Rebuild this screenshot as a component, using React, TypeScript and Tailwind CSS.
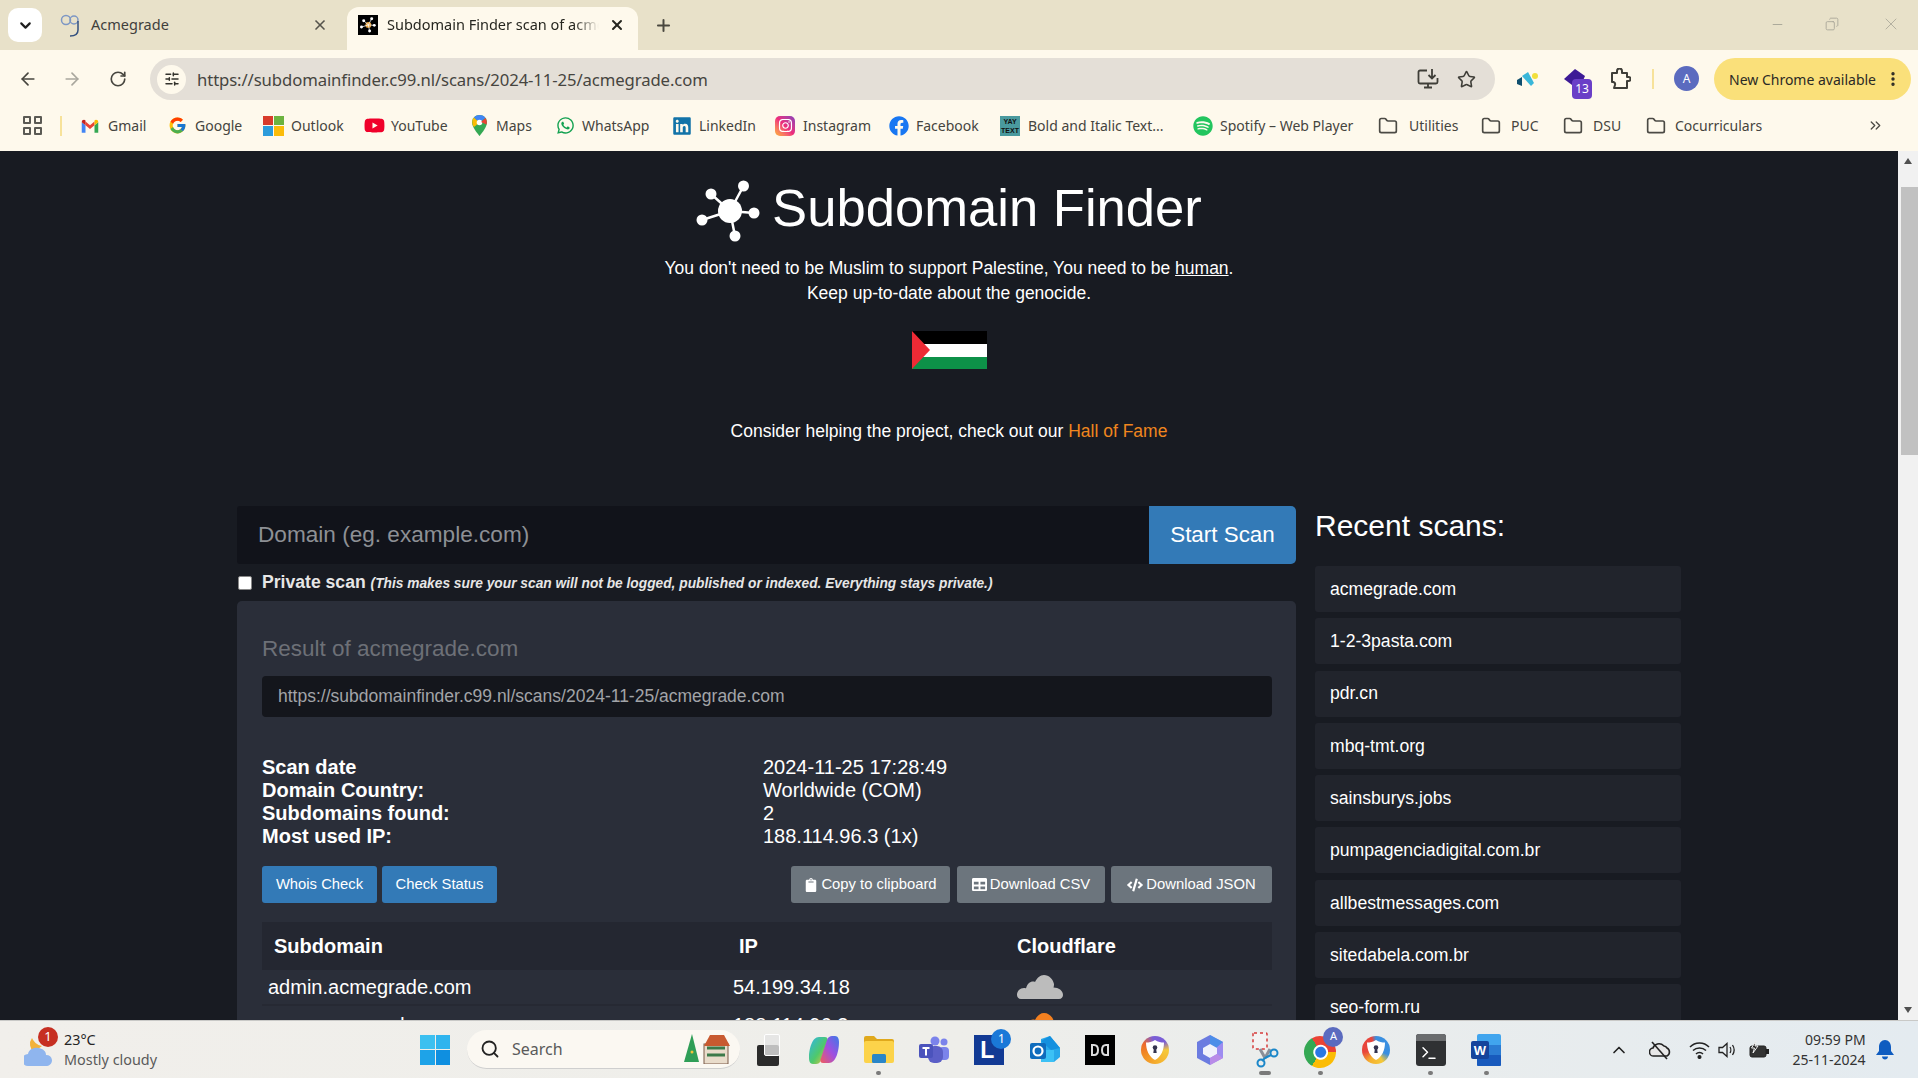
import React from "react";
import { ArrowLeft, ArrowRight, RotateCw, X, Plus, ChevronDown, Star, Search, Folder, ChevronsRight, ChevronUp, Minus, Copy, SlidersHorizontal, MoreVertical, Terminal } from "lucide-react";
import { FaWhatsapp, FaLinkedin, FaFacebook, FaSpotify, FaYoutube, FaClipboard, FaTable, FaCode, FaInstagram } from "react-icons/fa";
import { FcGoogle } from "react-icons/fc";

const Logo = ({ size = 65, color = "#fff" }: { size?: number; color?: string }) => (
  <svg width={size} height={size} viewBox="0 0 65 65" fill={color} stroke={color}>
    <circle cx="34" cy="32" r="12" stroke="none" />
    <circle cx="47.5" cy="7" r="5.5" stroke="none" />
    <circle cx="15" cy="15" r="5.5" stroke="none" />
    <circle cx="58" cy="34" r="5.5" stroke="none" />
    <circle cx="6" cy="41" r="5.5" stroke="none" />
    <circle cx="39" cy="57" r="5.5" stroke="none" />
    <path d="M34 32L47.5 7M34 32L15 15M34 32L58 34M34 32L6 41M34 32L39 57" strokeWidth="2.5" />
  </svg>
);

const Gmail = () => (
  <svg width="18" height="16" viewBox="0 0 24 20">
    <path d="M1 19V5l5 4v10z" fill="#4285f4" />
    <path d="M23 19V5l-5 4v10z" fill="#34a853" />
    <path d="M6 9v-5l6 5 6-5v5l-6 5z" fill="#ea4335" />
    <path d="M1 5c0-3 3-4 5-2.500V9z" fill="#c5221f" />
    <path d="M23 5c0-3-3-4-5-2.500V9z" fill="#fbbc04" />
  </svg>
);
const MsLogo = () => (
  <div className="grid grid-cols-2 gap-px w-[21px] h-[20px]">
    <div className="bg-[#d83b2b]" /><div className="bg-[#6cb33f]" />
    <div className="bg-[#2d9cdb]" /><div className="bg-[#fbbc09]" />
  </div>
);
const MapsPin = () => (
  <svg width="15" height="21" viewBox="0 0 15 21">
    <path d="M7.500 0C3.300 0 0 3.300 0 7.500 0 12.500 7.500 21 7.500 21S15 12.500 15 7.500C15 3.300 11.700 0 7.500 0z" fill="#34a853" />
    <path d="M2 2.500 L7.500 7.500 L2 12 C0 10 -.5 5 2 2.500z" fill="#fbbc04" />
    <path d="M7.500 0C10 0 12.500 1 13.500 3L7.500 7.500 L2 2.500C3 1 5 0 7.500 0z" fill="#4285f4" />
    <circle cx="7.500" cy="7.500" r="2.800" fill="#fff" />
    <path d="M13.500 3C15 5 15 8 14.500 9.500L9 7z" fill="#ea4335" />
  </svg>
);
const Insta = () => (
  <div className="w-5 h-5 rounded-[5px] bg-gradient-to-tr from-[#fdb022] via-[#ee2a7b] to-[#8a3ab9] flex items-center justify-center">
    <FaInstagram className="text-white" size={15} />
  </div>
);
const YayText = () => (
  <div className="w-[20px] h-[20px] bg-[#4a9a9e] flex flex-col items-center justify-center text-[7px] leading-[9px] font-bold text-[#111] font-['Liberation_Sans',sans-serif]">
    <span>YAY</span><span>TEXT</span>
  </div>
);
const Fold = () => <Folder size={20} strokeWidth={2} className="text-[#4b4a44]" />;

const bookmarks = [
  { w: "w-[87px]", icon: <Gmail />, t: "Gmail", gap: "gap-[9px]" },
  { w: "w-[95px]", icon: <FcGoogle size={19} />, t: "Google", gap: "gap-[8px]" },
  { w: "w-[101px]", icon: <MsLogo />, t: "Outlook", gap: "gap-[7px]" },
  { w: "w-[108px]", icon: <FaYoutube size={21} className="text-[#f0002a]" />, t: "YouTube", gap: "gap-[6px]" },
  { w: "w-[84px]", icon: <MapsPin />, t: "Maps", gap: "gap-[9px]" },
  { w: "w-[116px]", icon: <FaWhatsapp size={19} className="text-[#12a150]" />, t: "WhatsApp", gap: "gap-[7px]" },
  { w: "w-[103px]", icon: <FaLinkedin size={20} className="text-[#1273a8]" />, t: "LinkedIn", gap: "gap-[7px]" },
  { w: "w-[114px]", icon: <Insta />, t: "Instagram", gap: "gap-[8px]" },
  { w: "w-[111px]", icon: <FaFacebook size={20} className="text-[#1877f2]" />, t: "Facebook", gap: "gap-[7px]" },
  { w: "w-[193px]", icon: <YayText />, t: "Bold and Italic Text...", gap: "gap-[8px]" },
  { w: "w-[185px]", icon: <FaSpotify size={20} className="text-[#22c55e]" />, t: "Spotify – Web Player", gap: "gap-[7px]" },
  { w: "w-[103px]", icon: <Fold />, t: "Utilities", gap: "gap-[11px]" },
  { w: "w-[82px]", icon: <Fold />, t: "PUC", gap: "gap-[10px]" },
  { w: "w-[83px]", icon: <Fold />, t: "DSU", gap: "gap-[10px]" },
  { w: "w-[130px]", icon: <Fold />, t: "Cocurriculars", gap: "gap-[9px]" },
];

const recent = ["acmegrade.com", "1-2-3pasta.com", "pdr.cn", "mbq-tmt.org", "sainsburys.jobs", "pumpagenciadigital.com.br", "allbestmessages.com", "sitedabela.com.br", "seo-form.ru"];

const Cloud = ({ color }: { color: string }) => (
  <svg width="46" height="24" viewBox="0 0 46 24" fill={color}>
    <path d="M4 24C1.500 24 0 22 0 20c0-4 3-7 7-7 1 0 1.500 0 2 .5C10 9 13 6.500 16 6.500c1 0 1.500 0 2 .5C20 3 23 0 27 0c5 0 9 4 10 9 0 1 0 2-.5 3.500 5 0 9.500 3 9.500 7.500 0 2-1.500 4-4 4z" />
  </svg>
);

const Shield = ({ ring }: { ring: string }) => (
  <div className={`${ring} w-[28px] h-[28px] rounded-full flex items-center justify-center`}>
    <svg width="18" height="20" viewBox="0 0 18 20">
      <path d="M9 0c3 2 6 2.500 9 2.500C18 10 15 17 9 20 3 17 0 10 0 2.500 3 2.500 6 2 9 0z" fill="#fff" />
      <circle cx="9" cy="7.500" r="2.300" fill="#33334f" />
      <path d="M8 8h2l.7 5H7.300z" fill="#33334f" />
    </svg>
  </div>
);

const taskIcons: React.ReactNode[] = [
  <div key="tv" className="relative w-[24px] h-[32px]">
    <div className="absolute left-[0px] bottom-0 w-[22px] h-[21px] bg-[#2b2b2b] rounded-[2px]" />
    <div className="absolute left-[7px] top-0 w-[16px] h-[22px] bg-[#e3e3e3]/80 rounded-[2px] border border-white" />
  </div>,
  <svg key="cp" width="30" height="28" viewBox="0 0 30 28">
    <defs>
      <linearGradient id="cpa" x1="0" y1="0" x2="1" y2="1"><stop offset="0" stopColor="#2fb5e8" /><stop offset=".55" stopColor="#4fc96a" /><stop offset="1" stopColor="#f4c23c" /></linearGradient>
      <linearGradient id="cpb" x1="1" y1="0" x2="0" y2="1"><stop offset="0" stopColor="#3a7ae8" /><stop offset=".5" stopColor="#a04fe0" /><stop offset="1" stopColor="#f25c5c" /></linearGradient>
    </defs>
    <path d="M10 1h6c3 0 3 3 2 5l-6 18c-1 3-3 4-5 4H4c-3 0-4-3-4-6 0-9 3-21 10-21z" fill="url(#cpa)" />
    <path d="M20 27h-6c-3 0-3-3-2-5l6-18c1-3 3-4 5-4h3c3 0 4 3 4 6 0 9-3 21-10 21z" fill="url(#cpb)" />
  </svg>,
  <svg key="ex" width="30" height="27" viewBox="0 0 30 27">
    <path d="M0 2a2 2 0 0 1 2-2h8l3 3h15a2 2 0 0 1 2 2v3H0z" fill="#e0a91c" />
    <rect x="0" y="5" width="30" height="22" rx="2" fill="#fcd34a" />
    <rect x="8" y="18" width="14" height="9" rx="1.500" fill="#2a86c8" />
  </svg>,
  <svg key="te" width="30" height="27" viewBox="0 0 30 27">
    <circle cx="25" cy="6" r="3.500" fill="#7b83eb" />
    <circle cx="16" cy="5" r="4.500" fill="#7b83eb" />
    <rect x="20" y="11" width="10" height="13" rx="4" fill="#7b83eb" />
    <rect x="9" y="10" width="15" height="17" rx="6" fill="#5b5fc7" />
    <rect x="0" y="8" width="14" height="14" rx="2" fill="#4b53bc" />
    <path d="M3.500 11h7v2H8v6.500H6V13H3.500z" fill="#fff" />
  </svg>,
  <div key="l" className="relative w-[30px] h-[30px] bg-[#123a94] flex items-center justify-center">
    <span className="text-white text-[23px] font-bold font-['Liberation_Sans',sans-serif] leading-none -ml-[4px] mt-[2px]">L</span>
    <span className="absolute -top-[6px] -right-[7px] w-[20px] h-[20px] rounded-full bg-[#1a78d8] text-white text-[12px] flex items-center justify-center font-['Noto_Sans',sans-serif]">1</span>
  </div>,
  <svg key="ou" width="30" height="27" viewBox="0 0 30 27">
    <path d="M11 3l9-3 10 12v9l-6 5H11z" fill="#28a8ea" />
    <path d="M20 0l10 12-9 2-10-9z" fill="#1490df" />
    <path d="M11 14l13 0v12H11z" fill="#50d9ff" opacity=".5" />
    <rect x="0" y="7" width="16" height="16" rx="2" fill="#0f6cbd" />
    <circle cx="8" cy="15" r="4.500" fill="none" stroke="#fff" strokeWidth="2.200" />
  </svg>,
  <div key="do" className="w-[30px] h-[30px] bg-black flex items-center justify-center">
    <svg width="18" height="12" viewBox="0 0 18 12" fill="none" stroke="#ddd" strokeWidth="2"><path d="M1 1h2c3 0 4 2.500 4 5s-1 5-4 5H1zM17 1h-2c-3 0-4 2.500-4 5s1 5 4 5h2z" /></svg>
  </div>,
  <Shield key="p1" ring="bg-[conic-gradient(#7a5ed6_0deg,#7a5ed6_50deg,#f5c93a_90deg,#f5b02e_170deg,#f08a24_250deg,#ee6a2c_300deg,#7a5ed6_350deg)]" />,
  <svg key="ed" width="28" height="30" viewBox="0 0 28 30">
    <path d="M14 0l13 7v16l-13 7z" fill="#9d8cf0" />
    <path d="M14 0L1 7v16l13 7z" fill="#6b7be0" />
    <path d="M14 0l13 7-7 6-6-3z" fill="#4c8ee8" />
    <path d="M14 9l7 4v6l-7 4-7-4v-6z" fill="#f0f2fb" />
    <path d="M21 19l6 4-13 7v-7z" fill="#b98ce8" />
  </svg>,
  <svg key="sn" width="30" height="36" viewBox="0 0 30 36">
    <rect x="3" y="1" width="14" height="16" rx="1" fill="#f3f3f3" stroke="#d63b3b" strokeWidth="1.500" strokeDasharray="3 3" />
    <path d="M10 17l5 9M20 17l-5 9" stroke="#8a8f99" strokeWidth="3" />
    <circle cx="11" cy="31" r="3.500" fill="none" stroke="#1b87c9" strokeWidth="2" />
    <circle cx="24" cy="21" r="3.500" fill="none" stroke="#1b87c9" strokeWidth="2" />
    <path d="M15 26l-3 3M15 26l6-3" stroke="#1b87c9" strokeWidth="2" />
  </svg>,
  <div key="ch" className="relative w-[32px] h-[32px] flex items-center justify-center mt-[4px]">
    <div className="w-[32px] h-[32px] rounded-full bg-[conic-gradient(#ea4335_0deg_120deg,#fbbc04_120deg_240deg,#34a853_240deg_360deg)] flex items-center justify-center rotate-[-30deg]">
      <div className="w-[15px] h-[15px] rounded-full bg-[#2a78e4] border-2 border-white" />
    </div>
    <span className="absolute -top-[9px] right-[-7px] w-[20px] h-[20px] rounded-full bg-[#5b6bbf] text-white text-[11px] flex items-center justify-center font-['Noto_Sans',sans-serif]">A</span>
  </div>,
  <Shield key="p2" ring="bg-[conic-gradient(#3a8fe0_0deg,#3a8fe0_110deg,#f5c93a_150deg,#f5b02e_210deg,#e8453c_260deg,#e8453c_340deg,#3a8fe0_360deg)]" />,
  <div key="tm" className="w-[30px] h-[32px] bg-[#2f3133] rounded-[3px] flex flex-col overflow-hidden">
    <div className="h-[7px] bg-[#6a6c6e]" />
    <div className="flex-1 flex items-center pl-[4px]"><Terminal size={18} className="text-white" strokeWidth={2} /></div>
  </div>,
  <svg key="wd" width="30" height="32" viewBox="0 0 30 32">
    <rect x="6" y="0" width="24" height="32" rx="2" fill="#41a5ee" />
    <rect x="6" y="11" width="24" height="11" fill="#2b7cd3" />
    <rect x="6" y="21" width="24" height="11" rx="1" fill="#185abd" />
    <rect x="0" y="7" width="18" height="18" rx="2" fill="#15449c" />
    <text x="9" y="21" fontSize="13" fontWeight="700" fill="#fff" textAnchor="middle" fontFamily="Liberation Sans">W</text>
  </svg>,
];
const dots: (string | null)[] = [null, null, "w-[5px]", null, null, null, null, null, null, "w-[12px]", "w-[5px]", null, "w-[5px]", "w-[5px]"];

export default function App() {
  return (
    <div className="w-[1918px] h-[1078px] overflow-hidden flex flex-col bg-[#181b22] font-['Liberation_Sans',sans-serif]">
      {/* tab strip */}
      <div className="h-[50px] shrink-0 bg-[#e8e1c9] flex items-end font-['Noto_Sans',sans-serif] text-[#3f3f3c]">
        <div className="ml-[8px] mb-[8px] w-[34px] h-[34px] rounded-[10px] bg-white flex items-center justify-center">
          <ChevronDown size={17} strokeWidth={3} className="text-[#1f1f1f]" />
        </div>
        <div className="w-[305px] h-[43px] flex items-center pl-[18px] pr-[19px] pb-[7px]">
          <svg width="19" height="25" viewBox="0 0 19 25" fill="none" stroke="#7d97c4" strokeWidth="1.500">
            <circle cx="6" cy="7" r="4.500" /><circle cx="14" cy="7" r="4" /><path d="M18 8v9c0 5-4 6-8 6" stroke="#33507f" />
          </svg>
          <span className="ml-[12px] text-[14.500px] flex-1">Acmegrade</span>
          <X size={16} strokeWidth={2.500} className="text-[#55534c]" />
        </div>
        <div className="w-[291px] h-[43px] bg-[#fef9ec] rounded-t-[12px] flex items-center pl-[11px] pr-[13px] pb-[7px]">
          <div className="w-[20px] h-[20px] bg-black flex items-center justify-center shrink-0">
            <svg width="16" height="16" viewBox="0 0 65 65" fill="#fff" stroke="#fff">
              <circle cx="34" cy="32" r="12" fill="#e8a13a" stroke="none" />
              <circle cx="47.500" cy="7" r="6" stroke="none" /><circle cx="15" cy="15" r="6" stroke="none" /><circle cx="58" cy="34" r="6" stroke="none" /><circle cx="6" cy="41" r="6" stroke="none" /><circle cx="39" cy="57" r="6" stroke="none" />
              <path d="M34 32L47.500 7M34 32L15 15M34 32L58 34M34 32L6 41M34 32L39 57" strokeWidth="3" />
            </svg>
          </div>
          <span className="ml-[9px] text-[14.500px] w-[212px] overflow-hidden whitespace-nowrap text-[#26261f] [mask-image:linear-gradient(to_right,#000_88%,transparent)]">Subdomain Finder scan of acmegrade.com</span>
          <X size={16} strokeWidth={3} className="ml-auto text-[#26261f]" />
        </div>
        <Plus size={19} strokeWidth={2.500} className="ml-[16px] mb-[15px] text-[#4a483f]" />
        <div className="ml-auto flex items-center mb-[16px] text-[#a8a698]">
          <Minus size={15} strokeWidth={1.500} className="mr-[40px]" />
          <Copy size={14} strokeWidth={1.500} className="mr-[42px] -scale-x-100" />
          <X size={20} strokeWidth={1} className="mr-[17px]" />
        </div>
      </div>

      {/* toolbar */}
      <div className="h-[50px] shrink-0 bg-[#fef9ec] flex items-start pt-[8px] font-['Noto_Sans',sans-serif]">
        <ArrowLeft size={20} strokeWidth={2} className="ml-[18px] mt-[11px] text-[#47463f]" />
        <ArrowRight size={20} strokeWidth={2} className="ml-[24px] mt-[11px] text-[#a9a79d]" />
        <RotateCw size={18} strokeWidth={2.200} className="ml-[27px] mt-[12px] text-[#47463f]" />
        <div className="ml-[23px] w-[1345px] h-[42px] rounded-full bg-[#e4dfd7] flex items-center pl-[7px] pr-[19px]">
          <div className="w-[29px] h-[29px] rounded-full bg-[#fef9ec] flex items-center justify-center">
            <SlidersHorizontal size={16} strokeWidth={2.200} className="text-[#33322c]" />
          </div>
          <span className="ml-[11px] mt-[1px] text-[16.700px] text-[#46453f] tracking-[-0.100px]">https://subdomainfinder.c99.nl/scans/2024-11-25/acmegrade.com</span>
          <svg width="22" height="20" viewBox="0 0 22 20" fill="none" stroke="#3f3e38" strokeWidth="1.800" className="ml-auto mr-[2px]">
            <path d="M10 1.500H3a1.500 1.500 0 0 0-1.500 1.500v10A1.500 1.500 0 0 0 3 14.500h16a1.500 1.500 0 0 0 1.500-1.500V9" />
            <path d="M7 18.500h8M11 15v3" />
            <path d="M15 0v9M11.500 6l3.500 3.500L18.500 6" />
          </svg>
          <Star size={19} strokeWidth={2} className="ml-[16px] text-[#3f3e38]" />
        </div>
        <div className="ml-[21px] w-[24px] h-[24px] mt-[13px]">
          <svg width="22" height="16" viewBox="0 0 22 16">
            <path d="M1 9l5-3v9l-5-2z" fill="#0f4f6e" />
            <path d="M6 5l6-4 6 11-3 3z" fill="#3ab7d9" />
            <circle cx="19" cy="5" r="3" fill="#f1df3b" />
          </svg>
        </div>
        <div className="ml-[24px] relative w-[30px] h-[36px] mt-[3px]">
          <svg width="22" height="20" viewBox="0 0 22 20" className="absolute left-0 top-[8px]"><path d="M11 0l10 7-4 9H8L0 10z" fill="#3d1a96" /></svg>
          <span className="absolute left-[8px] top-[18px] w-[20px] h-[20px] rounded-[4px] bg-[#6a3fc7] text-white text-[12px] flex items-center justify-center">13</span>
        </div>
        <svg width="21" height="21" viewBox="0 0 21 21" fill="none" stroke="#3f3e38" strokeWidth="2" strokeLinejoin="round" className="ml-[16px] mt-[10px]">
          <path d="M2 5h5V3a2.500 2.500 0 0 1 5 0v2h5v4h1.500a2 2 0 0 1 0 4H17v7H4l1-3c.5-1.500-.5-2.500-1.500-3L2 14z" />
        </svg>
        <div className="ml-[21px] mt-[11px] w-[2px] h-[20px] bg-[#f7e29a]" />
        <div className="ml-[20px] mt-[8px] w-[25px] h-[25px] rounded-full bg-[#5b6bbf] text-white text-[12px] flex items-center justify-center">A</div>
        <div className="ml-[15px] w-[197px] h-[42px] rounded-full bg-[#fae07a] flex items-center pl-[15px] text-[14px] text-[#2b2a25] whitespace-nowrap">
          New Chrome available
          <MoreVertical size={18} strokeWidth={2.500} className="ml-auto mr-[9px]" />
        </div>
      </div>

      {/* bookmarks */}
      <div className="h-[51px] shrink-0 bg-[#fef9ec] flex items-center text-[14px] text-[#45443e] font-['Noto_Sans',sans-serif]">
        <div className="ml-[23px] grid grid-cols-2 gap-[3px] w-[19px]">
          <div className="h-[8px] border-2 border-[#5b5a54] rounded-[1px]" /><div className="h-[8px] border-2 border-[#5b5a54] rounded-[1px]" />
          <div className="h-[8px] border-2 border-[#5b5a54] rounded-[1px]" /><div className="h-[8px] border-2 border-[#5b5a54] rounded-[1px]" />
        </div>
        <div className="ml-[18px] mr-[19px] w-[2px] h-[20px] bg-[#f7e29a]" />
        {bookmarks.map((b) => (
          <div key={b.t} className={`${b.w} ${b.gap} flex items-center whitespace-nowrap shrink-0`}>
            {b.icon}
            <span>{b.t}</span>
          </div>
        ))}
        <ChevronsRight size={17} strokeWidth={1.800} className="ml-[91px] text-[#4b4a44]" />
      </div>

      {/* page + scrollbar */}
      <div className="flex-1 min-h-0 flex overflow-hidden">
        <div className="w-[1898px] shrink-0 flex flex-col text-white overflow-hidden">
          <div className="flex items-center justify-center pt-[21px] h-[92px] gap-[11px]">
            <div className="mt-[7px]"><Logo size={65} /></div>
            <h1 className="text-[52.600px] leading-[58px] font-normal">Subdomain Finder</h1>
          </div>
          <p className="mt-[13px] text-center text-[17.500px] leading-[25px]">
            You don't need to be Muslim to support Palestine, You need to be <span className="underline">human</span>.<br />Keep up-to-date about the genocide.
          </p>
          <div className="mt-[25px] mx-auto w-[75px] h-[38px]">
            <svg width="75" height="38" viewBox="0 0 75 38">
              <rect width="75" height="13" fill="#000" /><rect y="13" width="75" height="13" fill="#fff" /><rect y="26" width="75" height="12" fill="#0d9148" />
              <path d="M0 0L18 19 0 38z" fill="#ee2a35" />
            </svg>
          </div>
          <p className="mt-[50px] text-center text-[17.500px] leading-[25px]">
            Consider helping the project, check out our <span className="text-[#f0861e]">Hall of Fame</span>
          </p>

          <div className="mt-[62px] ml-[237px] w-[1444px] flex gap-[19px] items-start">
            <div className="w-[1059px] shrink-0">
              <div className="flex h-[58px]">
                <div className="flex-1 bg-[#11131a] rounded-l-[3px] flex items-center pl-[21px] text-[22.600px] text-[#8d9095]">Domain (eg. example.com)</div>
                <div className="w-[147px] bg-[#337ab7] rounded-r-[5px] flex items-center justify-center text-[22.400px]">Start Scan</div>
              </div>
              <div className="h-[37px] flex items-center gap-[10px]">
                <input type="checkbox" readOnly className="ml-[1px] w-[14px] h-[14px] appearance-none bg-white rounded-[2px] border border-[#888]" />
                <span className="font-bold text-[17.600px] text-[#e6e6e6]">Private scan <em className="text-[13.750px]">(This makes sure your scan will not be logged, published or indexed. Everything stays private.)</em></span>
              </div>
              <div className="rounded-[5px] bg-[#2a2e39] pl-[25px] pr-[24px] pt-[32px] h-[500px]">
                <h3 className="text-[22.500px] leading-[32px] text-[#6d7077] font-normal">Result of acmegrade.com</h3>
                <div className="mt-[11px] h-[41px] rounded-[4px] bg-[#14161c] flex items-center pl-[16px] text-[17.500px] text-[#a2a4a8]">https://subdomainfinder.c99.nl/scans/2024-11-25/acmegrade.com</div>
                <div className="mt-[39px] grid grid-cols-[501px_1fr] text-[20px] leading-[23px]">
                  <b>Scan date</b><span>2024-11-25 17:28:49</span>
                  <b>Domain Country:</b><span>Worldwide (COM)</span>
                  <b>Subdomains found:</b><span>2</span>
                  <b>Most used IP:</b><span>188.114.96.3 (1x)</span>
                </div>
                <div className="mt-[18px] flex h-[37px] text-[14.800px] gap-[5px]">
                  <div className="w-[115px] rounded-[3px] bg-[#337ab7] flex items-center justify-center">Whois Check</div>
                  <div className="w-[115px] rounded-[3px] bg-[#337ab7] flex items-center justify-center">Check Status</div>
                  <div className="ml-auto w-[159px] rounded-[3px] bg-[#6c757d] flex items-center justify-center gap-[3px]"><FaClipboard size={14} />Copy to clipboard</div>
                  <div className="ml-[2px] w-[148px] rounded-[3px] bg-[#6c757d] flex items-center justify-center gap-[3px]"><FaTable size={15} />Download CSV</div>
                  <div className="ml-[1px] w-[161px] rounded-[3px] bg-[#6c757d] flex items-center justify-center gap-[3px]"><FaCode size={16} />Download JSON</div>
                </div>
                <div className="mt-[19px] grid grid-cols-[465px_284px_1fr] text-[20px]">
                  <div className="h-[48px] bg-[#242731] flex items-center pl-[12px] font-bold">Subdomain</div>
                  <div className="h-[48px] bg-[#242731] flex items-center pl-[12px] font-bold">IP</div>
                  <div className="h-[48px] bg-[#242731] flex items-center pl-[6px] font-bold">Cloudflare</div>
                  <div className="h-[36px] flex items-center pl-[6px] border-b-2 border-[#262933]">admin.acmegrade.com</div>
                  <div className="h-[36px] flex items-center pl-[6px] border-b-2 border-[#262933]">54.199.34.18</div>
                  <div className="h-[36px] flex items-center pl-[6px] border-b-2 border-[#262933]"><Cloud color="#bcbcbc" /></div>
                  <div className="h-[38px] flex items-center pl-[6px]">www.acmegrade.com</div>
                  <div className="h-[38px] flex items-center pl-[6px]">188.114.96.3</div>
                  <div className="h-[38px] flex items-center pl-[6px]"><Cloud color="#f38020" /></div>
                </div>
              </div>
            </div>
            <div className="flex-1 min-w-0">
              <h2 className="text-[30px] leading-[38px] mt-[1px] font-normal">Recent scans:</h2>
              <div className="mt-[21px] flex flex-col gap-[6.300px]">
                {recent.map((r) => (
                  <div key={r} className="h-[46px] shrink-0 rounded-[3px] bg-[#21242c] flex items-center pl-[15px] text-[17.600px]">{r}</div>
                ))}
              </div>
            </div>
          </div>
        </div>
        <div className="w-[20px] shrink-0 bg-[#f1f1f1] flex flex-col items-center">
          <div className="mt-[7px] w-0 h-0 border-l-[4.500px] border-r-[4.500px] border-b-[6px] border-l-transparent border-r-transparent border-b-[#505050]" />
          <div className="mt-[23px] w-[17px] h-[268px] ml-[2px] bg-[#c1c1c1]" />
          <div className="mt-auto mb-[7px] w-0 h-0 border-l-[4.500px] border-r-[4.500px] border-t-[6px] border-l-transparent border-r-transparent border-t-[#505050]" />
        </div>
      </div>

      {/* taskbar */}
      <div className="h-[58px] shrink-0 bg-gradient-to-r from-[#f1efeb] via-[#eeeeea] to-[#e4ebf0] border-t border-[#c9c9c7] flex items-center font-['Noto_Sans',sans-serif]">
        <div className="relative ml-[24px] w-[34px] h-[44px] shrink-0">
          <svg width="32" height="34" viewBox="0 0 32 34" className="absolute left-0 top-[8px]">
            <path d="M8 2a10 10 0 0 0 2 14l8-6C13 9 10 6 8 2z" fill="#f2b23a" />
            <path d="M4 30a6 6 0 0 1 0-12c1-5 6-7 11-6 4 1 7 3 7 7a6 6 0 0 1 6 5c0 4-3 6-6 6z" fill="#8fb5ee" />
          </svg>
          <span className="absolute left-[14px] -top-[1px] w-[20px] h-[20px] rounded-full bg-[#c62f22] text-white text-[13px] flex items-center justify-center">1</span>
        </div>
        <div className="ml-[6px] text-[14.400px] leading-[20px] w-[120px] shrink-0">
          <div className="text-[#252525]">23°C</div>
          <div className="text-[#5a5a5a]">Mostly cloudy</div>
        </div>
        <div className="ml-[236px] grid grid-cols-2 gap-px w-[30px] h-[30px] shrink-0">
          <div className="bg-[#3cc0f0]" /><div className="bg-[#2fb4ee]" /><div className="bg-[#1ea3e8]" /><div className="bg-[#0f8fe0]" />
        </div>
        <div className="ml-[17px] w-[273px] h-[39px] rounded-full bg-[#fbf8f2] border-b border-[#cfcfcf] flex items-center pl-[13px] shrink-0">
          <Search size={20} strokeWidth={2.200} className="text-[#222]" />
          <span className="ml-[12px] text-[16px] text-[#5a5a5a]">Search</span>
          <svg width="46" height="30" viewBox="0 0 46 30" className="ml-auto mr-[10px]">
            <path d="M8 0l7 28H0z" fill="#2f9e57" />
            <circle cx="8" cy="18" r="1.500" fill="#f2c23a" />
            <rect x="20" y="10" width="24" height="20" fill="#e9dccb" stroke="#7a5a48" />
            <path d="M20 12L26 1h14l6 11z" fill="#c85a30" />
            <path d="M23 14h18M23 21h18" stroke="#3c7a4a" strokeWidth="3" />
          </svg>
        </div>
        <div className="ml-[1px] flex shrink-0">
          {taskIcons.map((ic, i) => (
            <div key={i} className="relative w-[55.200px] h-[57px] flex items-center justify-center">
              {ic}
              {dots[i] && <div className={`${dots[i]} absolute bottom-[3px] h-[4px] rounded-full bg-[#7a7a7a]`} />}
            </div>
          ))}
        </div>
        <ChevronUp size={20} strokeWidth={2} className="ml-[95px] text-[#222] shrink-0" />
        <svg width="22" height="20" viewBox="0 0 22 20" fill="none" stroke="#222" strokeWidth="1.600" className="ml-[20px] shrink-0">
          <path d="M5 16a4 4 0 0 1-1-8c1-4 7-6 11-2a4 4 0 0 1 3 2 4.500 4.500 0 0 1 0 8z" fill="#e8e8e8" />
          <path d="M3 2l15 17" />
        </svg>
        <svg width="21" height="18" viewBox="0 0 21 18" fill="none" stroke="#222" strokeWidth="1.500" className="ml-[18px] shrink-0">
          <path d="M1 6c5-5.500 14-5.500 19 0M4 9.500c3.500-3.500 9.500-3.500 13 0M7 13c2-2 5-2 7 0" />
          <circle cx="10.500" cy="16" r="1.300" fill="#222" />
        </svg>
        <svg width="18" height="16" viewBox="0 0 18 16" fill="none" stroke="#222" strokeWidth="1.300" className="ml-[8px] shrink-0">
          <path d="M1 5.500h3.500L9 1.500v13l-4.500-4H1z" />
          <path d="M12 5c1 1.500 1 4.500 0 6M14.500 3c2 3 2 7 0 10" />
        </svg>
        <svg width="21" height="18" viewBox="0 0 21 18" className="ml-[13px] shrink-0">
          <rect x="1" y="5" width="16" height="11" rx="2" fill="#333" stroke="#222" strokeWidth="1" />
          <rect x="17" y="8" width="3" height="5" fill="#222" />
          <path d="M7 0L2.500 7h3L4 12l5-7H6z" fill="#222" stroke="#f0f0f0" strokeWidth="1" />
        </svg>
        <div className="ml-[20px] w-[76px] text-right text-[14px] leading-[20px] text-[#333] whitespace-nowrap shrink-0">
          <div>09:59 PM</div>
          <div>25-11-2024</div>
        </div>
        <svg width="18" height="20" viewBox="0 0 18 20" fill="#0f5cc0" className="ml-[10px] shrink-0">
          <path d="M9 0c3.500 0 6 3 6 7v4l3 4H0l3-4V7c0-4 2.500-7 6-7z" /><path d="M6 16.500h6c0 4-6 4-6 0z" />
        </svg>
      </div>
    </div>
  );
}
